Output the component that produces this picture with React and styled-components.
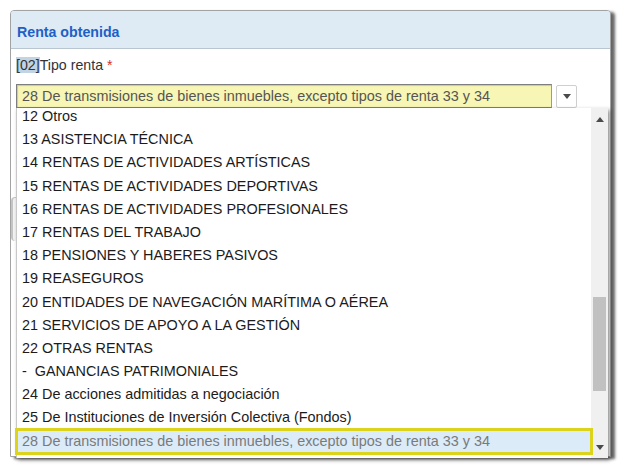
import React from "react";
import styled, { createGlobalStyle } from "styled-components";

const Global = createGlobalStyle`
  html, body { margin: 0; padding: 0; background: #fff; }
  body { font-family: "Liberation Sans", Arial, sans-serif; }
`;

const Page = styled.div`
  padding: 10px 0 0 10px;
  width: 621px;
  height: 469px;
  box-sizing: border-box;
  overflow: hidden;
`;

const Panel = styled.section`
  width: 601px;
  height: 447px;
  box-sizing: border-box;
  border: 1px solid #a3a3a3;
  border-radius: 4px 4px 0 0;
  background: #fff;
  box-shadow: 4px 2px 3px rgba(0, 0, 0, 0.6);
  display: flex;
  flex-direction: column;
`;

const Header = styled.header`
  height: 38px;
  flex-shrink: 0;
  box-sizing: border-box;
  background: #deeaf4;
  border-bottom: 1px solid #b9c6d1;
  border-radius: 3px 3px 0 0;
  display: flex;
  align-items: center;
  padding: 4px 0 0 6px;
`;

const Title = styled.h2`
  margin: 0;
  font-size: 14.2px;
  font-weight: bold;
  color: #1d60c6;
`;

const Body = styled.div`
  padding: 8px 5px 0 5px;
  display: flex;
  flex-direction: column;
`;

const Label = styled.div`
  font-size: 14.2px;
  line-height: 16px;
  color: #333;
`;

const Code = styled.span`
  background: #c2d3e4;
`;

const Req = styled.span`
  color: #d0302c;
`;

const SelectRow = styled.div`
  position: relative;
  margin-top: 11px;
  display: flex;
  gap: 4px;
  align-items: flex-start;
`;

const SelectField = styled.div`
  width: 536px;
  height: 24px;
  box-sizing: border-box;
  background: #f7f6b4;
  border: 1px solid #7e7e7e;
  border-right-color: #9a9a9a;
  box-shadow: inset 1px 1px 1px rgba(0, 0, 0, 0.18);
  font-size: 14.4px;
  line-height: 22px;
  color: #555;
  padding-left: 5px;
  white-space: nowrap;
`;

const DropButton = styled.div`
  width: 21px;
  height: 23px;
  margin-top: 1px;
  box-sizing: border-box;
  border: 1px solid #cfcfcf;
  border-radius: 2px;
  background: #fff;
  display: flex;
  align-items: center;
  justify-content: center;
`;

const Arrow = styled.span`
  width: 0;
  height: 0;
  border-left: 4px solid transparent;
  border-right: 4px solid transparent;
  ${(p) =>
    p.$up
      ? "border-bottom: 5px solid #4a4a4a;"
      : "border-top: 5px solid #4a4a4a;"}
`;

const List = styled.div`
  position: absolute;
  top: 24px;
  left: 0;
  width: 592px;
  height: 350px;
  box-sizing: border-box;
  background: #fff;
  border-left: 1px solid #c8c8c8;
  box-shadow: 2px 2px 4px rgba(0, 0, 0, 0.45);
  display: flex;
  z-index: 5;
`;

const Items = styled.ul`
  list-style: none;
  margin: 0;
  padding: 0;
  flex: 1;
  display: flex;
  flex-direction: column;
`;

const Item = styled.li`
  height: ${(p) => (p.$partial ? "20.2px" : "23.2px")};
  overflow: ${(p) => (p.$partial ? "hidden" : "visible")};
  flex-shrink: 0;
  box-sizing: border-box;
  padding-left: 5px;
  font-size: 14.4px;
  line-height: 23.2px;
  white-space: pre;
  color: ${(p) => (p.$selected ? "#7a7a7a" : "#1b1b1b")};
  background: ${(p) => (p.$selected ? "#dbebf8" : "transparent")};
  outline: ${(p) => (p.$selected ? "3px solid #dcd41c" : "none")};
  outline-offset: -1px;
  position: relative;
`;

const ItemText = styled.span`
  display: block;
  margin-top: ${(p) => (p.$partial ? "-3px" : "0")};
`;

const Scrollbar = styled.div`
  width: 17px;
  background: #f0f0f0;
  display: flex;
  flex-direction: column;
  align-items: center;
  padding: 9px 0 8px;
  box-sizing: border-box;
`;

const Track = styled.div`
  flex: 1;
  align-self: stretch;
  display: flex;
  flex-direction: column;
  justify-content: flex-start;
  padding-top: 175px;
`;

const Thumb = styled.div`
  height: 94px;
  margin: 0 2px 0 2px;
  background: #c1c1c1;
`;

const Hidden = styled.div`
  display: flex;
  flex-direction: column;
`;

const GhostInput = styled.div`
  margin-top: ${(p) => p.$mt}px;
  margin-left: ${(p) => p.$ml || 0}px;
  height: ${(p) => p.$h}px;
  border-left: 2px solid ${(p) => p.$c || "#8c8c8c"};
  border-radius: ${(p) => p.$r || 0}px;
  background: ${(p) => p.$bg || "transparent"};
  border-top: ${(p) => (p.$r ? "1px solid #c6c6c6" : "none")};
`;

const items = [
  "12 Otros",
  "13 ASISTENCIA TÉCNICA",
  "14 RENTAS DE ACTIVIDADES ARTÍSTICAS",
  "15 RENTAS DE ACTIVIDADES DEPORTIVAS",
  "16 RENTAS DE ACTIVIDADES PROFESIONALES",
  "17 RENTAS DEL TRABAJO",
  "18 PENSIONES Y HABERES PASIVOS",
  "19 REASEGUROS",
  "20 ENTIDADES DE NAVEGACIÓN MARÍTIMA O AÉREA",
  "21 SERVICIOS DE APOYO A LA GESTIÓN",
  "22 OTRAS RENTAS",
  "-  GANANCIAS PATRIMONIALES",
  "24 De acciones admitidas a negociación",
  "25 De Instituciones de Inversión Colectiva (Fondos)",
  "28 De transmisiones de bienes inmuebles, excepto tipos de renta 33 y 34",
];

const selected = "28 De transmisiones de bienes inmuebles, excepto tipos de renta 33 y 34";

export default function App() {
  return (
    <>
      <Global />
      <Page>
        <Panel>
          <Header>
            <Title>Renta obtenida</Title>
          </Header>
          <Body>
            <Label>
              <Code>[02]</Code>Tipo renta <Req>*</Req>
            </Label>
            <SelectRow>
              <SelectField>{selected}</SelectField>
              <DropButton>
                <Arrow />
              </DropButton>
              <List>
                <Items>
                  {items.map((t, i) => (
                    <Item key={t} $partial={i === 0} $selected={t === selected}>
                      <ItemText $partial={i === 0}>{t}</ItemText>
                    </Item>
                  ))}
                </Items>
                <Scrollbar>
                  <Arrow $up />
                  <Track>
                    <Thumb />
                  </Track>
                  <Arrow />
                </Scrollbar>
              </List>
            </SelectRow>
            <Hidden>
              <GhostInput $mt={19} $h={38} $c="#a8a8a8" />
              <GhostInput $mt={32} $ml={-5} $h={43} $r={4} $bg="#f3f3f3" $c="#c4c4c4" />
              <GhostInput $mt={50} $h={22} $c="#555" />
              <GhostInput $mt={47} $h={26} $c="#555" />
            </Hidden>
          </Body>
        </Panel>
      </Page>
    </>
  );
}
